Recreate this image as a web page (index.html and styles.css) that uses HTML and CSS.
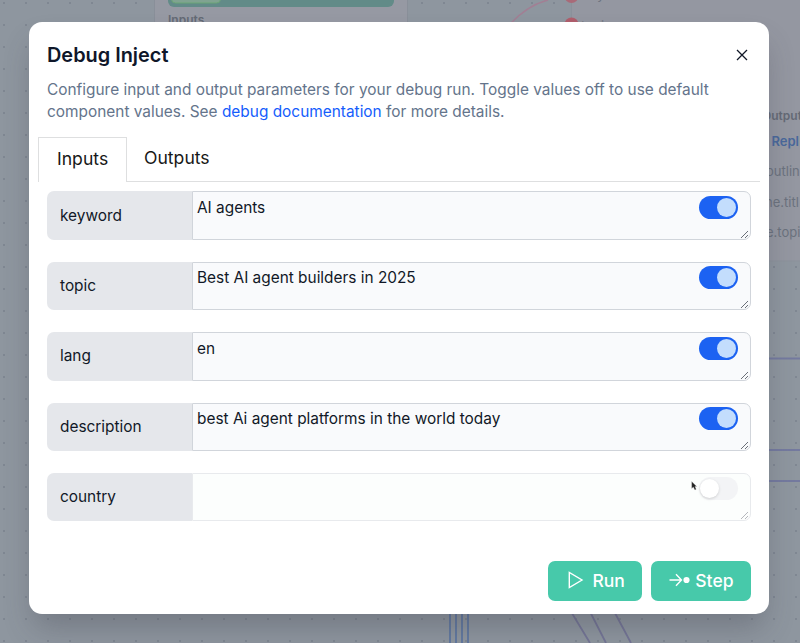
FILE: index.html
```html
<!DOCTYPE html>
<html lang="en">
<head>
<meta charset="utf-8">
<title>Debug Inject</title>
<link rel="stylesheet" href="styles.css">
</head>
<body>
<svg class="canvas" width="800" height="643" viewBox="0 0 800 643" aria-hidden="true">
  <defs>
    <pattern id="dots" width="22" height="22" patternUnits="userSpaceOnUse"><rect x="3" y="2" width="2" height="2" fill="#7f8792"/></pattern>
  </defs>
  <rect width="800" height="643" fill="#8e969f"/>
  <rect width="800" height="643" fill="url(#dots)"/>
  <rect x="154.500" y="-10" width="253" height="100" fill="#9699a3" stroke="#898f99"/>
  <rect x="168" y="-20" width="226" height="27" rx="6" fill="#628b88"/>
  <rect x="171.500" y="-20" width="49" height="23" rx="4" fill="#80a391" stroke="#6ba477"/>
  <text class="node-title" x="168" y="24">Inputs</text>
  <rect x="571.500" y="-10" width="250" height="271" fill="#9497a1" stroke="#8b919b"/>
  <path d="M510 24 Q528 5 548 0" fill="none" stroke="#a27f94" stroke-width="1.500"/>
  <circle cx="571.500" cy="-4" r="7" fill="#a96a78"/>
  <circle cx="571.500" cy="24.500" r="7" fill="#b05e6c"/>
  <text class="node-text" x="583" y="-1">key</text>
  <text class="node-text" x="581" y="31">topic</text>
  <text class="node-title" x="762" y="120">Output</text>
  <text class="node-link" x="771.500" y="146">Repl</text>
  <text class="node-text" x="766" y="176">outlin</text>
  <text class="node-text" x="765" y="207">ne.titl</text>
  <text class="node-text" x="766" y="237">e.topi</text>
  <g fill="none" stroke="#747a9f" stroke-width="2">
    <path d="M760 358.500H800M760 450H800M760 481H800"/>
  </g>
  <g fill="none" stroke="#6279a0" stroke-width="2"><path d="M450 600V643M456 600V643M462 600V643M468 600V643"/></g>
  <g fill="none" stroke="#747596" stroke-width="1.800"><path d="M564 600L590 643M584 600L606 643M608 600L631 643"/></g>
</svg>
<main class="dialog" role="dialog">
  <header class="head">
    <h1>Debug Inject</h1>
    <svg class="close" width="12" height="12" viewBox="0 0 12 12"><path d="M1 1L11 11M11 1L1 11"/></svg>
  </header>
  <p class="description">Configure input and output parameters for your debug run. Toggle values off to use default<br>component values. See <a>debug documentation</a> for more details.</p>
  <nav class="tabs"><div class="tab active">Inputs</div><div class="tab">Outputs</div></nav>
  <section class="fields">
    <div class="field"><div class="label">keyword</div><div class="value"><span>AI agents</span><i class="toggle"></i><svg class="grip" width="9" height="9" viewBox="0 0 9 9"><path d="M1 8L8 1M5 8L8 5"/></svg></div></div>
    <div class="field"><div class="label">topic</div><div class="value"><span>Best AI agent builders in 2025</span><i class="toggle"></i><svg class="grip" width="9" height="9" viewBox="0 0 9 9"><path d="M1 8L8 1M5 8L8 5"/></svg></div></div>
    <div class="field"><div class="label">lang</div><div class="value"><span>en</span><i class="toggle"></i><svg class="grip" width="9" height="9" viewBox="0 0 9 9"><path d="M1 8L8 1M5 8L8 5"/></svg></div></div>
    <div class="field"><div class="label">description</div><div class="value"><span>best Ai agent platforms in the world today</span><i class="toggle"></i><svg class="grip" width="9" height="9" viewBox="0 0 9 9"><path d="M1 8L8 1M5 8L8 5"/></svg></div></div>
    <div class="field off"><div class="label">country</div><div class="value"><span></span><i class="toggle"></i><svg class="grip" width="9" height="9" viewBox="0 0 9 9"><path d="M1 8L8 1M5 8L8 5"/></svg></div></div>
  </section>
  <footer class="actions">
    <button class="run"><svg width="16" height="18" viewBox="0 0 16 18"><path d="M1.300 1.500V16.500L14 9Z"/></svg>Run</button>
    <button class="step"><svg width="22" height="14" viewBox="0 0 22 14"><path d="M0.500 7H12.500M7 1.200L12.500 7L7 12.800"/><circle cx="17.500" cy="7" r="3.100"/></svg>Step</button>
  </footer>
</main>
<svg class="cursor" width="7" height="10" viewBox="0 0 7 10" aria-hidden="true"><path d="M0.700 0.500V7.500L2.300 6L3.900 9L5.200 8.300L3.900 5.500H5.700Z"/></svg>
</body>
</html>
```

FILE: styles.css
```css
* { box-sizing: border-box; }
body { margin: 0; width: 800px; height: 643px; overflow: hidden; padding: 22px 31px 29px 29px; font-family: Inter, sans-serif; color: #111827; }
.canvas { position: absolute; left: 0; top: 0; z-index: -1; }
.node-title { font: 600 12px Inter, sans-serif; fill: #646a75; }
.node-link { font: 600 13px Inter, sans-serif; fill: #49689b; }
.node-text { font: 400 13px Inter, sans-serif; fill: #6b727e; }
.dialog { display: flex; flex-direction: column; width: 740px; height: 592px; padding: 19px 9px 13px; border-radius: 13px; background: #fff; box-shadow: 0 18px 30px -5px rgba(60, 60, 70, .32); }
.head { display: flex; align-items: center; justify-content: space-between; height: 28px; padding: 0 12px 0 9px; }
h1 { margin: 0; font-size: 19.9px; line-height: 28px; font-weight: 600; color: #0f172a; }
.close { fill: none; stroke: #111827; stroke-width: 1.3; }
.description { margin: 10px 0 0 9px; font-size: 15.41px; line-height: 22px; color: #64748b; white-space: nowrap; }
.description a { color: #155dfc; }
.tabs { display: flex; height: 45px; margin-top: 14px; border-bottom: 1px solid #dedfe0; }
.tab { padding: 0 17px; font-size: 17.6px; line-height: 41px; color: #171717; }
.tab.active { width: 89px; height: 45px; padding: 0 0 0 18px; border: 1px solid #dedfe0; border-bottom: 0; background: #fff; }
.fields { display: grid; grid-auto-rows: 48.4px; gap: 22px; padding: 9.38px 9px 0; }
.field { display: flex; }
.label { width: 145px; padding: .2px 0 0 13px; border-radius: 7px 0 0 7px; background: #e5e7eb; font-size: 15.4px; line-height: 47px; }
.value { position: relative; display: flex; justify-content: space-between; flex: 1; padding: 3.4px 12px 0 4px; border: 1px solid #d1d5db; border-radius: 0 7px 7px 0; background: #f9fafc; font-size: 15.4px; line-height: 24px; }
.toggle { display: flex; width: 39px; height: 23px; padding: 2px; justify-content: flex-end; border-radius: 12px; background: #1c62f2; }
.toggle::after { content: ""; width: 19px; height: 19px; border-radius: 50%; background: #c3ddfd; }
.grip { position: absolute; right: 1px; bottom: 0; fill: none; stroke: #6a6f78; stroke-width: 1; }
.off .value { background: #fcfefd; border-color: #e8eaed; }
.off .toggle { padding-left: 1px; background: #f3f4f6; justify-content: flex-start; }
.off .toggle::after { background: #fff; box-shadow: 0 1px 3px rgba(0, 0, 0, .15); }
.off .grip { stroke: #b4b7bc; }
.actions { display: flex; justify-content: flex-end; gap: 9px; margin-top: auto; padding-right: 9px; }
button { display: flex; align-items: center; height: 40px; border: 0; border-radius: 7px; padding: 0 0 2px; background: #47c9aa; color: #fff; font: 500 17.5px Inter, sans-serif; }
.run { width: 94px; padding-left: 20px; gap: 8.500px; }
.step { width: 100px; padding-left: 18px; gap: 4.300px; }
button svg { fill: none; stroke: #fff; stroke-width: 1.4; }
button circle { fill: #fff; stroke: none; }
.cursor { position: absolute; left: 691px; top: 481px; fill: #222; stroke: #ccc; stroke-width: .3; }
```
